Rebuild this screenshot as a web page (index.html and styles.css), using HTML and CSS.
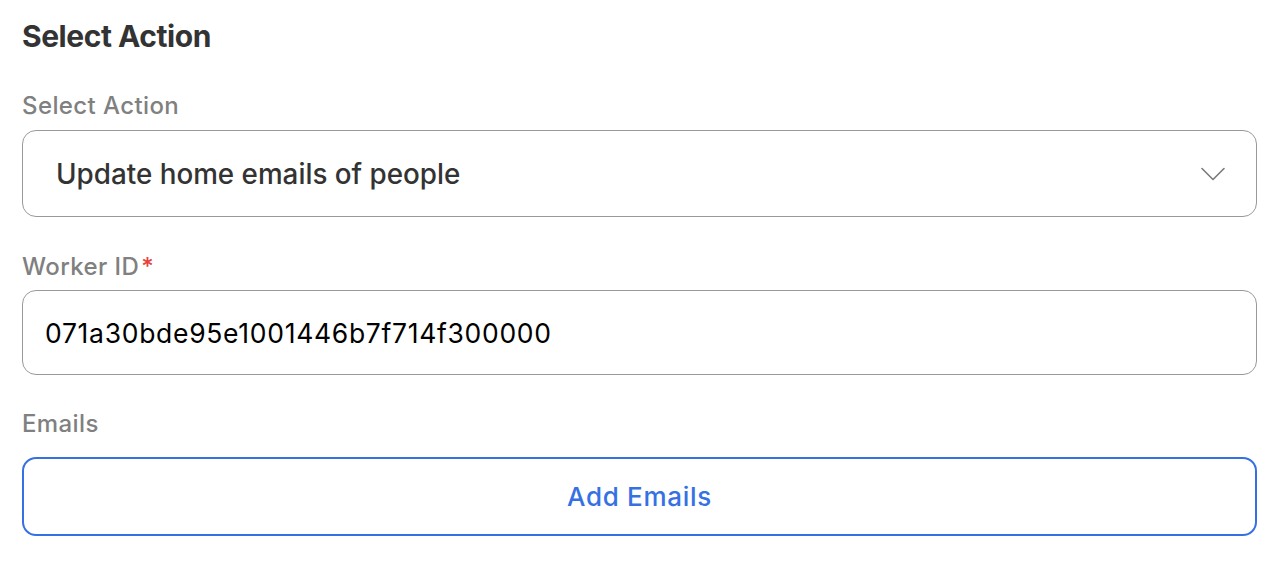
FILE: index.html
```html
<!DOCTYPE html>
<html>
<head>
<meta charset="utf-8">
<link rel="stylesheet" href="styles.css">
</head>
<body>
<div class="panel">
  <h2 class="title">Select Action</h2>
  <div class="field">
    <div class="label">Select Action</div>
    <div class="select">
      <span class="select-value">Update home emails of people</span>
      <svg class="chevron" width="24" height="14" viewBox="0 0 24 14"><path d="M1 1.5 L12 12.5 L23 1.5" fill="none" stroke="#7a7a7a" stroke-width="1.6" stroke-linecap="round" stroke-linejoin="round"/></svg>
    </div>
  </div>
  <div class="field">
    <div class="label">Worker ID<span class="req">*</span></div>
    <div class="input">071a30bde95e1001446b7f714f300000</div>
  </div>
  <div class="field">
    <div class="label">Emails</div>
    <button class="add-btn">Add Emails</button>
  </div>
</div>
</body>
</html>
```
FILE: styles.css
```css
html, body {
  margin: 0;
  padding: 0;
  background: #ffffff;
}
body {
  font-family: Inter, "Noto Sans", sans-serif;
}
.panel {
  padding: 21px 25px 0 22px;
  display: flex;
  flex-direction: column;
}
.title {
  margin: 0;
  font-size: 30px;
  font-weight: 700;
  letter-spacing: -0.45px;
  color: #333333;
  line-height: 30px;
}
.field {
  display: flex;
  flex-direction: column;
}
.label {
  font-size: 24px;
  font-weight: 500;
  letter-spacing: 0.4px;
  color: #808080;
  line-height: 24px;
  margin-top: 37px;
  margin-bottom: 12px;
}
.title + .field .label {
  margin-top: 43px;
}
.field:nth-child(3) .label {
  margin-top: 38px;
}
.req {
  color: #e8403a;
  margin-left: 2px;
}
.select {
  height: 87px;
  box-sizing: border-box;
  border: 1.6px solid #999999;
  border-radius: 14px;
  display: flex;
  align-items: center;
  justify-content: space-between;
  padding: 0 31px 0 33px;
}
.select-value {
  font-size: 27.8px;
  font-weight: 500;
  color: #333333;
}
.input {
  height: 85px;
  margin-top: -1px;
  box-sizing: border-box;
  border: 1.6px solid #999999;
  border-radius: 14px;
  display: flex;
  align-items: center;
  padding: 0 22px;
  font-size: 26.5px;
  letter-spacing: 0.7px;
  color: #000000;
}
.add-btn {
  margin-top: 9px;
  height: 79px;
  box-sizing: border-box;
  border: 2px solid #3571e3;
  border-radius: 14px;
  background: #ffffff;
  font-family: inherit;
  font-size: 26px;
  font-weight: 500;
  letter-spacing: 0.7px;
  color: #3571e3;
  cursor: pointer;
}
```
